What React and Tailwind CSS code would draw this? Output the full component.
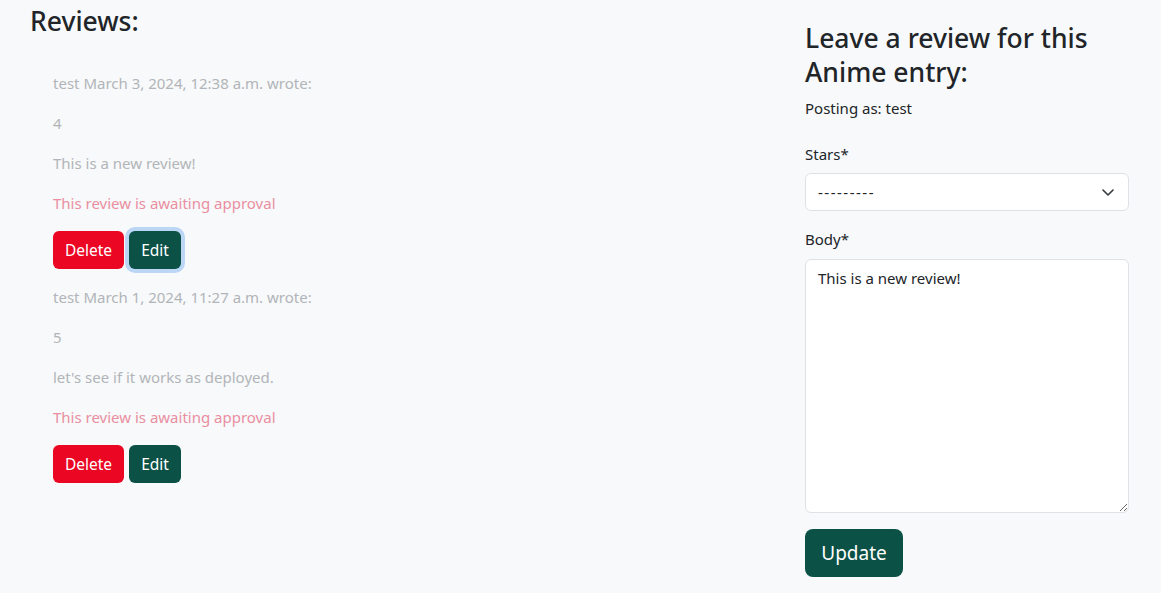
function Review({ meta, stars, body, focused }) {
  return (
    <div>
      <p className="mb-4 leading-6 text-[#b1b5b9]">{meta}</p>
      <p className="mb-4 leading-6 text-[#b1b5b9]">{stars}</p>
      <p className="mb-4 leading-6 text-[#b1b5b9]">{body}</p>
      <p className="mb-4 leading-6 text-[#e98fa1]">This review is awaiting approval</p>
      <div className="flex gap-[5px] mb-4">
        <button className="h-[38px] w-[71px] rounded-[6px] bg-[#eb0623] text-white text-[15.5px] leading-6">Delete</button>
        <button
          className={
            focused
              ? "h-[38px] w-[52px] rounded-[6px] bg-[#0b5146] text-white text-[15.5px] leading-6 shadow-[0_0_0_4px_#bcd6f6]"
              : "h-[38px] w-[52px] rounded-[6px] bg-[#0b5146] text-white text-[15.5px] leading-6"
          }
        >
          Edit
        </button>
      </div>
    </div>
  );
}

export default function App() {
  return (
    <div
      className="h-[593px] w-full bg-[#f8f9fa] text-[#212529] text-[15px] flex overflow-hidden"
      style={{ fontFamily: '"Noto Sans", sans-serif' }}
    >
      <div className="flex-1 pl-[30px] pt-[5px]">
        <h3 className="text-[26.5px] font-medium leading-[33.6px] mb-[32px]">Reviews:</h3>
        <div className="pl-[23px]">
          <Review
            meta="test March 3, 2024, 12:38 a.m. wrote:"
            stars="4"
            body="This is a new review!"
            focused
          />
          <Review
            meta="test March 1, 2024, 11:27 a.m. wrote:"
            stars="5"
            body="let's see if it works as deployed."
          />
        </div>
      </div>
      <div className="w-[324px] mr-[32px] pt-[22px]">
        <h3 className="text-[26.5px] font-medium leading-[33.6px] mb-[7px]">
          Leave a review for this Anime entry:
        </h3>
        <p className="leading-6 mb-[22px]">Posting as: test</p>
        <label className="block leading-6 mb-[7px]">Stars*</label>
        <div className="relative mb-4">
          <select className="appearance-none w-full h-[38px] bg-white border border-[#dee2e6] rounded-[6px] pl-3 pr-9 leading-6 tracking-[1.5px] text-[#212529] outline-none">
            <option>---------</option>
          </select>
          <svg
            className="absolute right-[15px] top-[16px] pointer-events-none"
            width="12"
            height="7"
            viewBox="0 0 12 7"
            fill="none"
          >
            <path d="M1 1l5 5 5-5" stroke="#343a40" strokeWidth="1.6" strokeLinecap="round" strokeLinejoin="round" />
          </svg>
        </div>
        <label className="block leading-6 mb-2">Body*</label>
        <textarea
          className="block w-full h-[254px] bg-white border border-[#dee2e6] rounded-[6px] px-3 py-[6px] leading-6 text-[#212529] outline-none mb-4"
          defaultValue="This is a new review!"
        />
        <button className="h-[48px] w-[98px] rounded-[8px] bg-[#0b5146] text-white text-[19px] leading-[30px]">
          Update
        </button>
      </div>
    </div>
  );
}
